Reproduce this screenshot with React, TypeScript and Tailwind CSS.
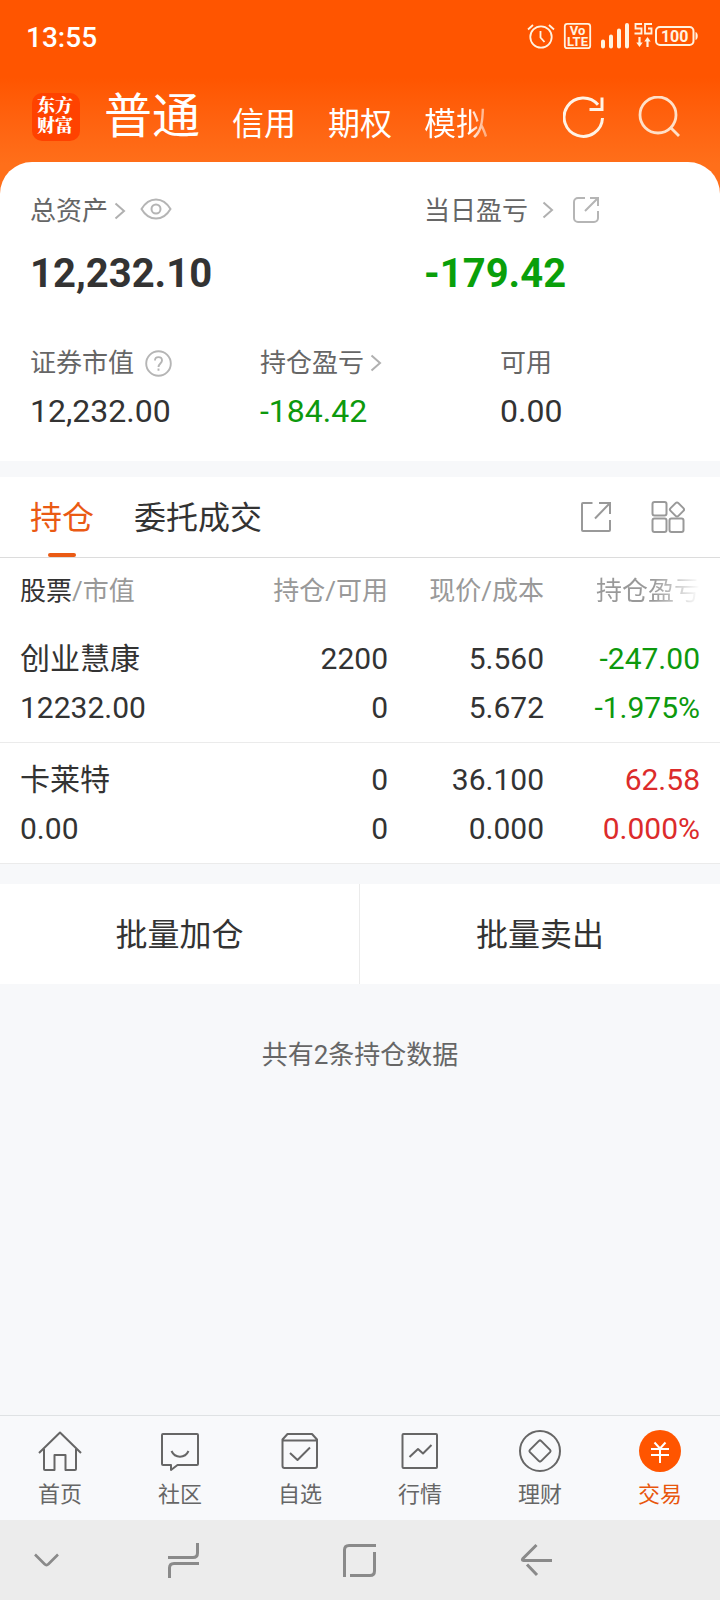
import React from 'react';

type Tone = 'up' | 'down';

interface Holding {
    name: string;
    marketValue: string;
    amount: string;
    available: string;
    price: string;
    cost: string;
    profit: string;
    profitRate: string;
    tone: Tone;
}

const HOLDINGS: Holding[] = [
    { name: '创业慧康', marketValue: '12232.00', amount: '2200', available: '0', price: '5.560', cost: '5.672', profit: '-247.00', profitRate: '-1.975%', tone: 'down' },
    { name: '卡莱特', marketValue: '0.00', amount: '0', available: '0', price: '36.100', cost: '0.000', profit: '62.58', profitRate: '0.000%', tone: 'up' },
];

const TONE_CLASS: Record<Tone, string> = {
    up: 'text-[#dc2b2b]',
    down: 'text-[#0d990d]',
};

const ChevronRight: React.FC = () => (
    <svg width="12" height="18" viewBox="0 0 12 18" fill="none" stroke="#b0b0b0" strokeWidth="2">
        <path d="M1.5 1.5 10 9l-8.500 7.500" />
    </svg>
);

const StatusBar: React.FC = () => (
    <div className="flex h-[72px] items-center justify-between pl-[26px] pr-5">
        <span className="mt-1 text-[28px] font-medium leading-8">13:55</span>
        <svg width="174" height="32" viewBox="0 0 174 32" fill="none" stroke="#fff3e0">
            {/* alarm */}
            <g strokeWidth="1.8">
                <circle cx="15" cy="17" r="10.700" />
                <path d="M14.500 11v6.500l4 4.500M2 9.500l5-4.500M28 9.500 23 5" />
            </g>
            {/* volte */}
            <rect x="38.800" y="3.800" width="25.400" height="24.400" rx="2.500" strokeWidth="1.800" />
            <text fill="#fff3e0" stroke="none" fontSize="13" textAnchor="middle" className="font-['Roboto'] font-bold">
                <tspan x="51.500" y="15">Vo</tspan>
                <tspan x="51.500" y="26.300">LTE</tspan>
            </text>
            {/* signal */}
            <path d="M77 21.500v5M85 16.500v10M93 10.500v16M101 5v21.500" strokeWidth="4" strokeLinecap="round" />
            <path d="M116 4h-6.500v4.500h6v5h-7M126 4h-7v9.500h6.500v-5h-3.500" strokeWidth="1.800" />
            <path d="M113.500 17v8M121.500 19v8" strokeWidth="2.200" />
            <path d="M110.300 22.500h6.400l-3.200 4.500zM118.300 21.500h6.400l-3.200-4.500z" fill="#fff3e0" stroke="none" />
            {/* battery */}
            <rect x="130" y="7" width="37.500" height="18" rx="4" strokeWidth="2" />
            <path d="M169.500 12c3 1 3 7 0 8z" fill="#fff3e0" stroke="none" />
            <text x="148.700" y="21.800" fontSize="16" textAnchor="middle" fill="#fff3e0" stroke="none" className="font-['Roboto'] font-bold">100</text>
        </svg>
    </div>
);

const Header: React.FC = () => (
    <div className="flex h-[90px] pl-8 pr-10">
        <div className="mt-[21px] h-12 w-12 shrink-0 rounded-[10px] bg-[#ff4200] pt-px pr-0.5 text-center font-['Noto_Serif_CJK_SC','Noto_Sans_CJK_SC',serif] text-[18px] font-black leading-5">
            东方<br />财富
        </div>
        <div className="ml-6 flex w-[384px] shrink-0 items-baseline gap-8 overflow-hidden whitespace-nowrap">
            <span className="text-5xl leading-[90px]">普通</span>
            <span className="relative top-0.5 text-[32px]">信用</span>
            <span className="relative top-0.5 text-[32px]">期权</span>
            <span className="relative top-0.5 bg-linear-to-r from-white from-70% to-white/40 bg-clip-text text-[32px] text-transparent">模拟</span>
        </div>
        <div className="ml-auto mt-6 flex gap-[33px]">
            <svg width="42" height="42" viewBox="0 0 42 42" fill="none" stroke="#fff3e6" strokeWidth="3">
                <path d="M39.500 22A19.200 19.200 0 1 1 35 8.800" />
                <path d="M39 1.500v12H26.500" />
            </svg>
            <svg width="42" height="42" viewBox="0 0 42 42" fill="none" stroke="#ffe0c8" strokeWidth="2.800">
                <circle cx="20" cy="19" r="18" />
                <path d="m32 31 9 9" />
            </svg>
        </div>
    </div>
);

const Summary: React.FC = () => (
    <section className="h-[299px] rounded-t-[32px] bg-white px-[30px] pt-[29px] text-[26px] text-[#666]">
        <div className="flex">
            <div className="w-[394px]">
                <div className="flex h-10 items-center">
                    <span>总资产</span>
                    <span className="ml-1.5"><ChevronRight /></span>
                    <svg width="32" height="22" viewBox="0 0 32 22" fill="none" stroke="#b5b5b5" strokeWidth="2" className="-mt-1 ml-3.5">
                        <path d="M1.500 11C9-1.800 23-1.800 30.500 11 23 23.800 9 23.800 1.500 11z" />
                        <circle cx="16" cy="11" r="4.500" />
                    </svg>
                </div>
                <div className="mt-[18px] text-[40px] font-bold leading-[50px] text-[#333]">12,232.10</div>
            </div>
            <div>
                <div className="flex h-10 items-center">
                    <span>当日盈亏</span>
                    <span className="-mt-0.5 ml-3.5"><ChevronRight /></span>
                    <svg width="28" height="28" viewBox="0 0 28 28" fill="none" stroke="#b5b5b5" strokeWidth="2" className="-mt-0.5 ml-[18px]">
                        <path d="M13 2H6a4 4 0 0 0-4 4v16a4 4 0 0 0 4 4h16a4 4 0 0 0 4-4v-7" />
                        <path d="M18 2h8v8M26 2 13 15" />
                    </svg>
                </div>
                <div className="mt-[18px] text-[40px] font-bold leading-[50px] text-[#0a9f0a]">-179.42</div>
            </div>
        </div>
        <div className="mt-11 flex">
            <div className="w-[230px]">
                <div className="flex h-10 items-center gap-[11px]">
                    <span>证券市值</span>
                    <svg width="27" height="27" viewBox="0 0 27 27" fill="none" stroke="#b5b5b5" strokeWidth="1.900">
                        <circle cx="13.500" cy="13.500" r="12.300" />
                        <path d="M10 10.500c0-4.500 7-4.500 7 0 0 3-3.500 3-3.500 6.500M13.500 18.500v2.200" />
                    </svg>
                </div>
                <div className="mt-2 text-[32px] leading-10 text-[#333]">12,232.00</div>
            </div>
            <div className="w-[240px]">
                <div className="flex h-10 items-center gap-1.5">
                    <span>持仓盈亏</span>
                    <ChevronRight />
                </div>
                <div className="mt-2 text-[32px] leading-10 text-[#0d990d]">-184.42</div>
            </div>
            <div>
                <div className="flex h-10 items-center">可用</div>
                <div className="mt-2 text-[32px] leading-10 text-[#333]">0.00</div>
            </div>
        </div>
    </section>
);

const Tabs: React.FC = () => (
    <div className="mt-4 flex h-[81px] justify-between border-b border-[#dcdcdc] bg-white pl-[30px] pr-[35px] text-[32px]">
        <div className="flex gap-10 leading-[82px]">
            <div className="relative text-[#ea5a14]">
                持仓
                <span className="absolute bottom-0 left-[18px] h-1 w-7 rounded-full bg-[#ea5a14]" />
            </div>
            <div className="text-[#333]">委托成交</div>
        </div>
        <div className="flex items-center gap-[39px]">
            <svg width="32" height="32" viewBox="0 0 32 32" fill="none" stroke="#999" strokeWidth="2">
                <path d="M12.500 2H3a1 1 0 0 0-1 1v26a1 1 0 0 0 1 1h26a1 1 0 0 0 1-1V19" />
                <path d="M19 2h11v11M30 2 15 17.500" />
            </svg>
            <svg width="34" height="34" viewBox="0 0 34 34" fill="none" stroke="#999" strokeWidth="2">
                <rect x="1.500" y="2" width="14" height="13.500" rx="2" />
                <rect x="1.500" y="18.500" width="14" height="13.500" rx="2" />
                <rect x="18.500" y="18.500" width="14" height="13.500" rx="2" />
                <path d="M24.600 3.100q1.400-1.400 2.800 0l5 5q1.400 1.400 0 2.800l-5 5q-1.400 1.400-2.800 0l-5-5q-1.400-1.400 0-2.800z" />
            </svg>
        </div>
    </div>
);

const HoldingRow: React.FC<{ item: Holding }> = ({ item }) => (
    <div className="flex h-[121px] border-b border-[#ebebeb] px-5 pt-3 text-[30px] leading-[49px] text-[#333]">
        <div className="w-[218px]">
            <div>{item.name}</div>
            <div>{item.marketValue}</div>
        </div>
        <div className="w-[150px] text-right">
            <div>{item.amount}</div>
            <div>{item.available}</div>
        </div>
        <div className="w-[156px] text-right">
            <div>{item.price}</div>
            <div>{item.cost}</div>
        </div>
        <div className={`w-[156px] text-right ${TONE_CLASS[item.tone]}`}>
            <div>{item.profit}</div>
            <div>{item.profitRate}</div>
        </div>
    </div>
);

const Holdings: React.FC = () => (
    <section className="bg-white">
        <div className="flex h-16 px-5 text-[26px] leading-[66px] text-[#999]">
            <div className="w-[218px]"><span className="text-[#333]">股票</span>/市值</div>
            <div className="w-[150px] text-right">持仓/可用</div>
            <div className="w-[156px] text-right">现价/成本</div>
            <div className="ml-[52px] w-[104px] whitespace-nowrap bg-linear-to-r from-[#999] from-55% to-white bg-clip-text text-transparent">持仓盈亏</div>
        </div>
        {HOLDINGS.map((item) => <HoldingRow key={item.name} item={item} />)}
    </section>
);

const TAB_ITEMS = [
    {
        label: '首页',
        icon: (
            <g>
                <path d="M2 24 23 3.500 44 24" />
                <path d="M6.500 20v20q0 1 1 1h9.500V26h11v15h9.500q1 0 1-1V20" transform="translate(.5 0)" />
            </g>
        ),
    },
    {
        label: '社区',
        icon: (
            <g>
                <path d="M6 5h34q1 0 1 1v29q0 1-1 1H20.500L14 41v-5H6q-1 0-1-1V6q0-1 1-1z" />
                <path d="M14.500 22c3.500 7.500 13.500 7.500 17 0" />
            </g>
        ),
    },
    {
        label: '自选',
        icon: (
            <g>
                <path d="M5.500 10.500V37q0 2 2 2H38q2 0 2-2V10.500L35 5H10.500zM5.500 11.500H40" />
                <path d="m13 24 7.500 7L33 18.500" />
            </g>
        ),
    },
    {
        label: '行情',
        icon: (
            <g>
                <rect x="5.500" y="5" width="34.500" height="34" rx="1" />
                <path d="m12.500 28 8.500-8 5 4.500 8.500-8.500" />
            </g>
        ),
    },
    {
        label: '理财',
        icon: (
            <g>
                <circle cx="23" cy="22" r="20" />
                <path d="M21.900 11.900q1.100-1 2.200 0l9 9q1 1.100 0 2.200l-9 9q-1.100 1-2.200 0l-9-9q-1-1.100 0-2.200z" />
            </g>
        ),
    },
    {
        label: '交易',
        active: true,
        icon: (
            <g>
                <circle cx="23" cy="22" r="21" fill="#ff5500" stroke="none" />
                <path d="m17.500 13.500 5.500 6 5.500-6M14 20h18M14 26h18M23 19.500V34" stroke="#fff" />
            </g>
        ),
    },
];

const TabBar: React.FC = () => (
    <nav className="flex h-[105px] border-t border-[#dfe2e4] bg-[#f8f9fb]">
        {TAB_ITEMS.map((item) => (
            <div key={item.label} className={`flex w-[120px] flex-col items-center pt-[13px] text-[22px] ${item.active ? 'text-[#e8560c]' : 'text-[#666]'}`}>
                <svg width="46" height="44" viewBox="0 0 46 44" fill="none" stroke="#666" strokeWidth="2" strokeLinejoin="round">
                    {item.icon}
                </svg>
                <span className="mt-[7px] leading-[30px]">{item.label}</span>
            </div>
        ))}
    </nav>
);

const SystemNav: React.FC = () => (
    <div className="flex h-20 items-center bg-[#ececec] pl-7">
        <svg width="524" height="40" viewBox="28 1540 524 40" fill="none" stroke="#8a8a8a" strokeWidth="3">
            <path d="m35 1554.500 9.500 9.500q2 2 4 0l9.500-9.500" strokeWidth="2.600" />
            <path d="M197.500 1543v10q0 4.500-4.500 4.500h-25M169.500 1578v-10q0-4.500 4.500-4.500h25" />
            <path d="M344.500 1577v-27q0-4.500 4.500-4.500h27M374.500 1552v19q0 4.500-4.500 4.500h-20" />
            <path d="M552 1560.500h-28.500q-2 0-.5-2l13.500-13.500M527 1564.500l10 10.500" />
        </svg>
    </div>
);

export default function App() {
    return (
        <div className="flex h-[1600px] w-[720px] flex-col overflow-hidden bg-[#f7f8fa] font-['Roboto','Noto_Sans_CJK_SC',sans-serif]">
            <div className="bg-linear-to-b from-[#ff5500] from-40% to-[#ff6f1a] to-85% text-white h-[194px] -mb-8 shrink-0">
                <StatusBar />
                <Header />
            </div>
            <Summary />
            <Tabs />
            <Holdings />
            <div className="mt-5 flex h-[100px] bg-white text-center text-[32px] leading-[102px] text-[#333]">
                <button className="w-[360px] border-r border-[#ebebeb]">批量加仓</button>
                <button className="flex-1">批量卖出</button>
            </div>
            <p className="mt-[51px] text-center text-[26px] leading-10 text-[#666]">共有2条持仓数据</p>
            <div className="mt-auto">
                <TabBar />
                <SystemNav />
            </div>
        </div>
    );
}
